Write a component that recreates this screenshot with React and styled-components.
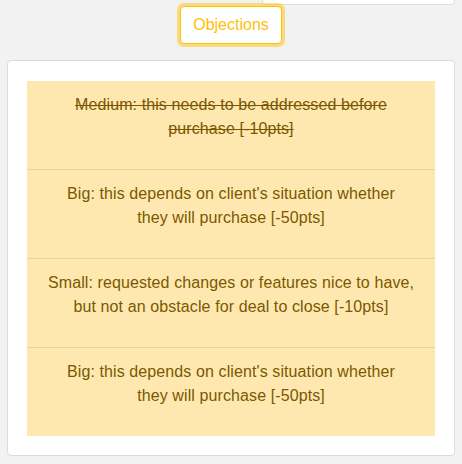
import React from "react";
import styled, { createGlobalStyle } from "styled-components";

const GlobalStyle = createGlobalStyle`
  html, body {
    margin: 0;
    padding: 0;
    background: #f2f2f2;
    font-family: "Liberation Sans", Arial, sans-serif;
  }
`;

const Page = styled.div`
  width: 462px;
  height: 464px;
  overflow: hidden;
  display: flex;
  flex-direction: column;
`;

const TopStrip = styled.div`
  display: flex;
  justify-content: flex-end;
  padding-right: 7px;
`;

const PeekCard = styled.div`
  width: 193px;
  height: 5px;
  background: #fff;
  border: 1px solid #ddd;
  border-top: none;
  border-radius: 0 0 4px 4px;
  box-sizing: border-box;
`;

const ButtonRow = styled.div`
  display: flex;
  justify-content: center;
  margin-top: 1px;
`;

const OutlineButton = styled.button`
  font-family: inherit;
  font-size: 16px;
  line-height: 24px;
  padding: 6px 12px;
  color: #ffc107;
  background: #fff;
  border: 1px solid #ffc107;
  border-radius: 4px;
  box-shadow: 0 0 0 3px rgba(255, 193, 7, 0.5);
  cursor: pointer;
`;

const Card = styled.div`
  margin: 16px 7px 0;
  background: #fff;
  border: 1px solid #dcdcdc;
  border-radius: 4px;
  padding: 20px 19px 19px;
`;

const List = styled.ul`
  list-style: none;
  margin: 0;
  padding: 0;
  background: #ffe8b0;
`;

const Item = styled.li`
  padding: 12px 20px;
  text-align: center;
  color: #7a5800;
  font-size: 16px;
  line-height: 24px;
  letter-spacing: 0.1px;
  border-top: ${(p) => (p.$first ? "none" : "1px solid #ebd496")};

  p {
    margin: 0 0 16px;
    text-decoration: ${(p) => (p.$done ? "line-through" : "none")};
  }
`;

const Line = styled.span`
  display: block;
  white-space: nowrap;
`;

const objections = [
  { lines: ["Medium: this needs to be addressed before", "purchase [-10pts]"], done: true },
  { lines: ["Big: this depends on client's situation whether", "they will purchase [-50pts]"] },
  { lines: ["Small: requested changes or features nice to have,", "but not an obstacle for deal to close [-10pts]"] },
  { lines: ["Big: this depends on client's situation whether", "they will purchase [-50pts]"] },
];

export default function App() {
  return (
    <Page>
      <GlobalStyle />
      <TopStrip>
        <PeekCard />
      </TopStrip>
      <ButtonRow>
        <OutlineButton>Objections</OutlineButton>
      </ButtonRow>
      <Card>
        <List>
          {objections.map((o, i) => (
            <Item key={i} $first={i === 0} $done={o.done}>
              <p>
                {o.lines.map((l, j) => (
                  <Line key={j}>{l}</Line>
                ))}
              </p>
            </Item>
          ))}
        </List>
      </Card>
    </Page>
  );
}
